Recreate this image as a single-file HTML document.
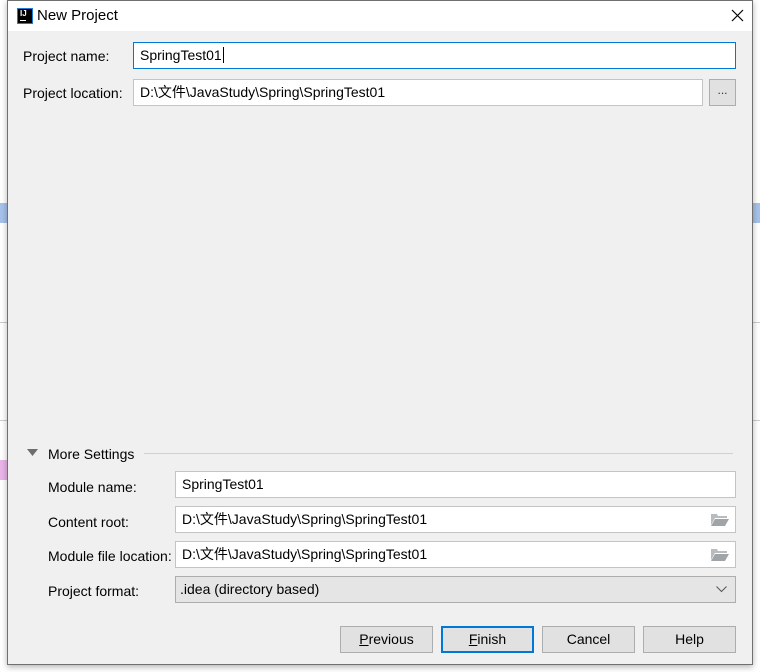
<!DOCTYPE html>
<html><head><style>
*{margin:0;padding:0;box-sizing:border-box}
body{width:760px;height:672px;background:#fff;position:relative;overflow:hidden;font-family:"Liberation Sans","Noto Sans CJK SC",sans-serif;font-size:14px;color:#000}
.a{position:absolute}
.dlg{left:7px;top:0;width:746px;height:665px;background:#f0f0f0;border:1px solid #707070;box-shadow:0 2px 6px rgba(0,0,0,.3)}
.title{left:0;top:0;width:744px;height:30px;background:#fff}
.inp{position:absolute;background:#fff;border:1px solid #c4c4c4;height:27px;padding-left:6px;line-height:25px;font-size:14px}
.lbl{position:absolute;font-size:14px}
.btn{position:absolute;top:626px;height:27px;width:93px;background:#e1e1e1;border:1px solid #adadad;text-align:center;line-height:25px;font-size:14px}
.fold{position:absolute;right:6px;top:6px}
</style></head><body>
<!-- background IDE bits -->
<div class="a" style="left:0;top:203px;width:7px;height:20px;background:#a6c2ea"></div>
<div class="a" style="left:752px;top:203px;width:8px;height:20px;background:#a6c2ea"></div>
<div class="a" style="left:0;top:460px;width:7px;height:20px;background:#e8b4e8"></div>
<div class="a" style="left:0;top:322px;width:7px;height:1px;background:#ccc"></div>
<div class="a" style="left:752px;top:322px;width:8px;height:1px;background:#ccc"></div>
<div class="a" style="left:0;top:420px;width:7px;height:1px;background:#ccc"></div>
<div class="a" style="left:752px;top:420px;width:8px;height:1px;background:#ccc"></div>
<div class="a dlg">
 <div class="a title">
  <div class="a" style="left:9px;top:7px;width:16px;height:16px;background:#000;border:1px solid #1e7bd6;color:#fff;font-size:8px;font-weight:bold;line-height:10px;padding-left:2px">IJ<div style="position:absolute;left:2px;bottom:2px;width:6px;height:1px;background:#fff"></div></div>
  <div class="a" style="left:29px;top:6px;font-size:15px">New Project</div>
  <svg class="a" style="left:723px;top:8px" width="13" height="13"><path d="M1 1L12 12M12 1L1 12" stroke="#000" stroke-width="1.2"/></svg>
 </div>
</div>
<div class="lbl" style="left:23px;top:48px">Project name:</div>
<div class="inp" style="left:133px;top:42px;width:603px;border:1px solid #0078d7">SpringTest01<span style="border-left:1px solid #000;margin-left:1px"></span></div>
<div class="lbl" style="left:23px;top:85px">Project location:</div>
<div class="inp" style="left:133px;top:79px;width:570px">D:\文件\JavaStudy\Spring\SpringTest01</div>
<div class="a" style="left:709px;top:79px;width:27px;height:27px;background:#e1e1e1;border:1px solid #adadad;text-align:center;font-size:12px;line-height:20px;color:#333">...</div>

<svg class="a" style="left:27px;top:449px" width="11" height="8"><path d="M0 0H11L5.5 7Z" fill="#6e6e6e"/></svg>
<div class="lbl" style="left:48px;top:446px">More Settings</div>
<div class="a" style="left:144px;top:453px;width:589px;height:1px;background:#d0d0d0"></div>

<div class="lbl" style="left:48px;top:479px">Module name:</div>
<div class="inp" style="left:175px;top:471px;width:561px">SpringTest01</div>
<div class="lbl" style="left:48px;top:514px">Content root:</div>
<div class="inp" style="left:175px;top:506px;width:561px">D:\文件\JavaStudy\Spring\SpringTest01
 <svg class="fold" width="18" height="13"><path d="M0 1H6L7 3H16V5H4L0 12Z" fill="#b8bcbf"/><path d="M4 6H18L14 13H0Z" fill="#9fa4a8"/></svg></div>
<div class="lbl" style="left:48px;top:548px">Module file location:</div>
<div class="inp" style="left:175px;top:541px;width:561px">D:\文件\JavaStudy\Spring\SpringTest01
 <svg class="fold" width="18" height="13"><path d="M0 1H6L7 3H16V5H4L0 12Z" fill="#b8bcbf"/><path d="M4 6H18L14 13H0Z" fill="#9fa4a8"/></svg></div>
<div class="lbl" style="left:48px;top:583px">Project format:</div>
<div class="inp" style="left:175px;top:576px;width:561px;background:#e5e5e5;border-color:#adadad;padding-left:4px">.idea (directory based)
 <svg class="a" style="right:8px;top:9px" width="11" height="7"><path d="M0.5 0.5L5.5 5.5L10.5 0.5" stroke="#555" fill="none"/></svg></div>

<div class="btn" style="left:340px"><u>P</u>revious</div>
<div class="btn" style="left:441px;border:2px solid #0078d7;line-height:23px"><u>F</u>inish</div>
<div class="btn" style="left:542px">Cancel</div>
<div class="btn" style="left:643px">Help</div>
</body></html>
